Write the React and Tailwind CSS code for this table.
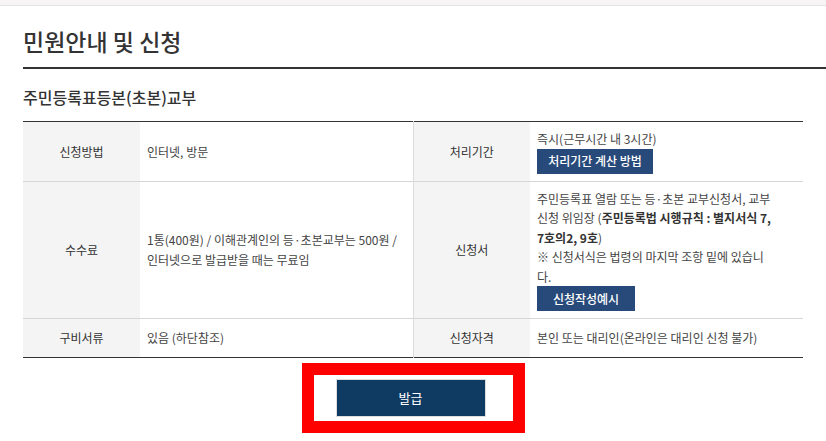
export default function App() {
  const font = { fontFamily: '"Noto Sans CJK KR", "Noto Sans", sans-serif' };
  return (
    <div className="w-[826px] h-[441px] bg-white overflow-hidden text-[#333]" style={font}>
      <div className="h-[5px] bg-[#f6f4f4] border-b border-[#e4e4e4] box-content" />
      <div className="pl-[23px]">
        <h1 className="text-[23px] font-medium leading-none pt-[24px] pb-[14px] border-b-2 border-[#333]">
          민원안내 및 신청
        </h1>
        <h2 className="text-[16px] font-medium leading-none pt-[20px] pb-[16px]">
          주민등록표등본(초본)교부
        </h2>
        <table className="w-[780px] border-collapse text-[12px] leading-[19.5px] border-t border-b border-[#333] table-fixed">
          <colgroup>
            <col className="w-[117px]" />
            <col className="w-[273px]" />
            <col className="w-[117px]" />
            <col className="w-[273px]" />
          </colgroup>
          <tbody>
            <tr className="border-b border-[#d6d6d6]">
              <th className="bg-[#f4f4f4] font-normal text-center">신청방법</th>
              <td className="px-[7px] text-[#444]">인터넷, 방문</td>
              <th className="bg-[#f4f4f4] font-normal text-center border-l border-[#dcdcdc]">처리기간</th>
              <td className="px-[7px] py-[7px] text-[#444]">
                <div>즉시(근무시간 내 3시간)</div>
                <div className="w-[116px] h-[25px] bg-[#284a7b] text-white flex items-center justify-center text-[12px] font-medium">
                  처리기간 계산 방법
                </div>
              </td>
            </tr>
            <tr className="border-b border-[#d6d6d6]">
              <th className="bg-[#f4f4f4] font-normal text-center">수수료</th>
              <td className="px-[7px] text-[#444]">
                1통(400원) / 이해관계인의 등·초본교부는 500원 /<br />
                인터넷으로 발급받을 때는 무료임
              </td>
              <th className="bg-[#f4f4f4] font-normal text-center border-l border-[#dcdcdc]">신청서</th>
              <td className="px-[7px] pt-[7px] pb-[7px] text-[#444]">
                <div>
                  주민등록표 열람 또는 등·초본 교부신청서, 교부<br />
                  신청 위임장 (<b className="font-bold text-[#333]">주민등록법 시행규칙 : 별지서식 7,<br />7호의2, 9호</b>)<br />
                  ※ 신청서식은 법령의 마지막 조항 밑에 있습니<br />
                  다.
                </div>
                <div className="w-[98px] h-[25px] bg-[#284a7b] text-white flex items-center justify-center text-[12px] font-medium">
                  신청작성예시
                </div>
              </td>
            </tr>
            <tr>
              <th className="bg-[#f4f4f4] font-normal text-center h-[39px]">구비서류</th>
              <td className="px-[7px] text-[#444]">있음 (하단참조)</td>
              <th className="bg-[#f4f4f4] font-normal text-center border-l border-[#dcdcdc]">신청자격</th>
              <td className="px-[7px] text-[#444]">본인 또는 대리인(온라인은 대리인 신청 불가)</td>
            </tr>
          </tbody>
        </table>
      </div>
      <div className="flex justify-center pt-[5px]">
        <div className="w-[223px] h-[70px] border-[12px] border-[#ff0000] bg-white flex items-center pl-[22px]">
          <div className="w-[150px] h-[38px] bg-[#0f3a62] border border-[#dddddd] text-white text-[13px] flex items-center justify-center">
            발급
          </div>
        </div>
      </div>
    </div>
  );
}
